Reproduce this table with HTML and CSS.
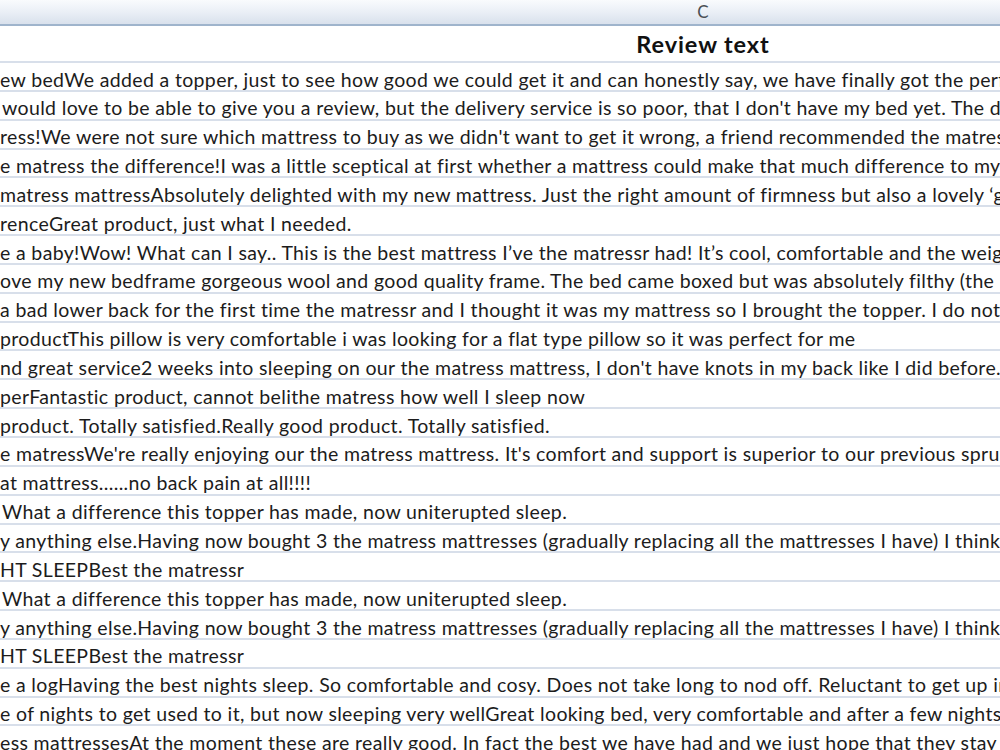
FILE: index.html
```html
<!DOCTYPE html>
<html lang="en">
<head>
<meta charset="utf-8">
<title>Review text</title>
<link rel="stylesheet" href="styles.css">
</head>
<body>
<div class="sheet">
  <div class="colhead"><span class="colhead-label">C</span></div>
  <div class="title-row"><span class="title">Review text</span></div>
  <div class="rows">
    <div class="row">ew bedWe added a topper, just to see how good we could get it and can honestly say, we have finally got the perfect</div>
    <div class="row ind">would love to be able to give you a review, but the delivery service is so poor, that I don't have my bed yet. The delivery</div>
    <div class="row">ress!We were not sure which mattress to buy as we didn't want to get it wrong, a friend recommended the matress</div>
    <div class="row">e matress the difference!I was a little sceptical at first whether a mattress could make that much difference to my sleep</div>
    <div class="row">matress mattressAbsolutely delighted with my new mattress. Just the right amount of firmness but also a lovely ‘give’</div>
    <div class="row">renceGreat product, just what I needed.</div>
    <div class="row">e a baby!Wow! What can I say.. This is the best mattress I’ve the matressr had! It’s cool, comfortable and the weight</div>
    <div class="row">ove my new bedframe gorgeous wool and good quality frame. The bed came boxed but was absolutely filthy (the box</div>
    <div class="row">a bad lower back for the first time the matressr and I thought it was my mattress so I brought the topper. I do not think</div>
    <div class="row">productThis pillow is very comfortable i was looking for a flat type pillow so it was perfect for me</div>
    <div class="row">nd great service2 weeks into sleeping on our the matress mattress, I don't have knots in my back like I did before. I</div>
    <div class="row">perFantastic product, cannot belithe matress how well I sleep now</div>
    <div class="row">product. Totally satisfied.Really good product. Totally satisfied.</div>
    <div class="row">e matressWe're really enjoying our the matress mattress. It's comfort and support is superior to our previous sprung</div>
    <div class="row">at mattress......no back pain at all!!!!</div>
    <div class="row ind">What a difference this topper has made, now uniterupted sleep.</div>
    <div class="row">y anything else.Having now bought 3 the matress mattresses (gradually replacing all the mattresses I have) I think</div>
    <div class="row">HT SLEEPBest the matressr</div>
    <div class="row ind">What a difference this topper has made, now uniterupted sleep.</div>
    <div class="row">y anything else.Having now bought 3 the matress mattresses (gradually replacing all the mattresses I have) I think</div>
    <div class="row">HT SLEEPBest the matressr</div>
    <div class="row">e a logHaving the best nights sleep. So comfortable and cosy. Does not take long to nod off. Reluctant to get up in the</div>
    <div class="row">e of nights to get used to it, but now sleeping very wellGreat looking bed, very comfortable and after a few nights stay</div>
    <div class="row">ess mattressesAt the moment these are really good. In fact the best we have had and we just hope that they stay</div>
  </div>
</div>
</body>
</html>
```
FILE: styles.css
```css
html, body {
  margin: 0;
  padding: 0;
  background: #ffffff;
}
body {
  width: 1000px;
  height: 750px;
  overflow: hidden;
  font-family: Lato, "Liberation Sans", sans-serif;
  color: #1c1c1c;
}
.sheet {
  width: 1000px;
  display: flex;
  flex-direction: column;
}
.colhead {
  box-sizing: border-box;
  height: 26px;
  padding-left: 406px;
  display: flex;
  justify-content: center;
  align-items: center;
  background: linear-gradient(to bottom, #f9fbfd 0%, #eaeff6 50%, #d9e1ec 100%);
  border-bottom: 2px solid #9fb4cc;
}
.colhead-label {
  font-size: 17px;
  color: #4a4f55;
  line-height: 20px;
}
.title-row {
  box-sizing: border-box;
  height: 37px;
  padding-left: 406px;
  display: flex;
  justify-content: center;
  align-items: center;
  border-bottom: 2px solid #d8dfea;
}
.title {
  font-weight: 700;
  font-size: 23.5px;
  letter-spacing: 0.9px;
  color: #111111;
  line-height: 26px;
  padding-top: 1px;
}
.rows {
  display: grid;
  grid-auto-rows: 28.85px;
}
.row {
  box-sizing: border-box;
  border-bottom: 2px solid #d8dfea;
  font-size: 19.5px;
  letter-spacing: 0.35px;
  line-height: 20px;
  padding-top: 6.5px;
  white-space: nowrap;
  overflow: hidden;
}
.ind {
  padding-left: 2px;
}
```
